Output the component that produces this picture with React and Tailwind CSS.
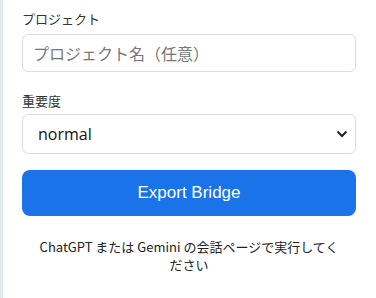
import React from "react";

export default function App() {
  return (
    <div className="flex min-h-[298px] w-[376px] bg-white">
      <div className="w-[3px] shrink-0 bg-[#e3eaec]" />
      <div className="flex-1 pl-[19px] pr-[20px] pt-[10px] font-['Segoe_UI','Noto_Sans_CJK_JP',sans-serif] text-[#222]">
        <label className="block text-[13px] leading-[18px] text-[#333]">プロジェクト</label>
        <input
          className="mt-[6px] box-border block h-[38px] w-full rounded-[6px] border border-[#dadce0] px-[10px] text-[16px] text-[#222] placeholder:text-[#777] outline-none"
          placeholder="プロジェクト名（任意）"
        />
        <label className="mt-[20px] block text-[13px] leading-[18px] text-[#333]">重要度</label>
        <div className="relative mt-[4px] h-[40px] w-full rounded-[6px] border border-[#dadce0]">
          <div className="flex h-full items-center px-[15px] font-['Open_Sans',sans-serif] text-[16px] font-normal text-[#111]">normal</div>
          <svg className="absolute right-[7px] top-[14px]" width="12" height="10" viewBox="0 0 12 10">
            <path d="M1.5 2.5 L6 7 L10.5 2.5" fill="none" stroke="#222" strokeWidth="2" />
          </svg>
        </div>
        <button className="mt-[16px] flex h-[46px] w-full items-center justify-center rounded-[8px] bg-[#1a73e8] font-['Liberation_Sans',Arial,sans-serif] text-[17px] text-white">
          Export Bridge
        </button>
        <p className="mt-[22px] px-[13px] text-center text-[13px] leading-[18px] text-[#222]">
          ChatGPT または Gemini の会話ページで実行してください
        </p>
      </div>
    </div>
  );
}
